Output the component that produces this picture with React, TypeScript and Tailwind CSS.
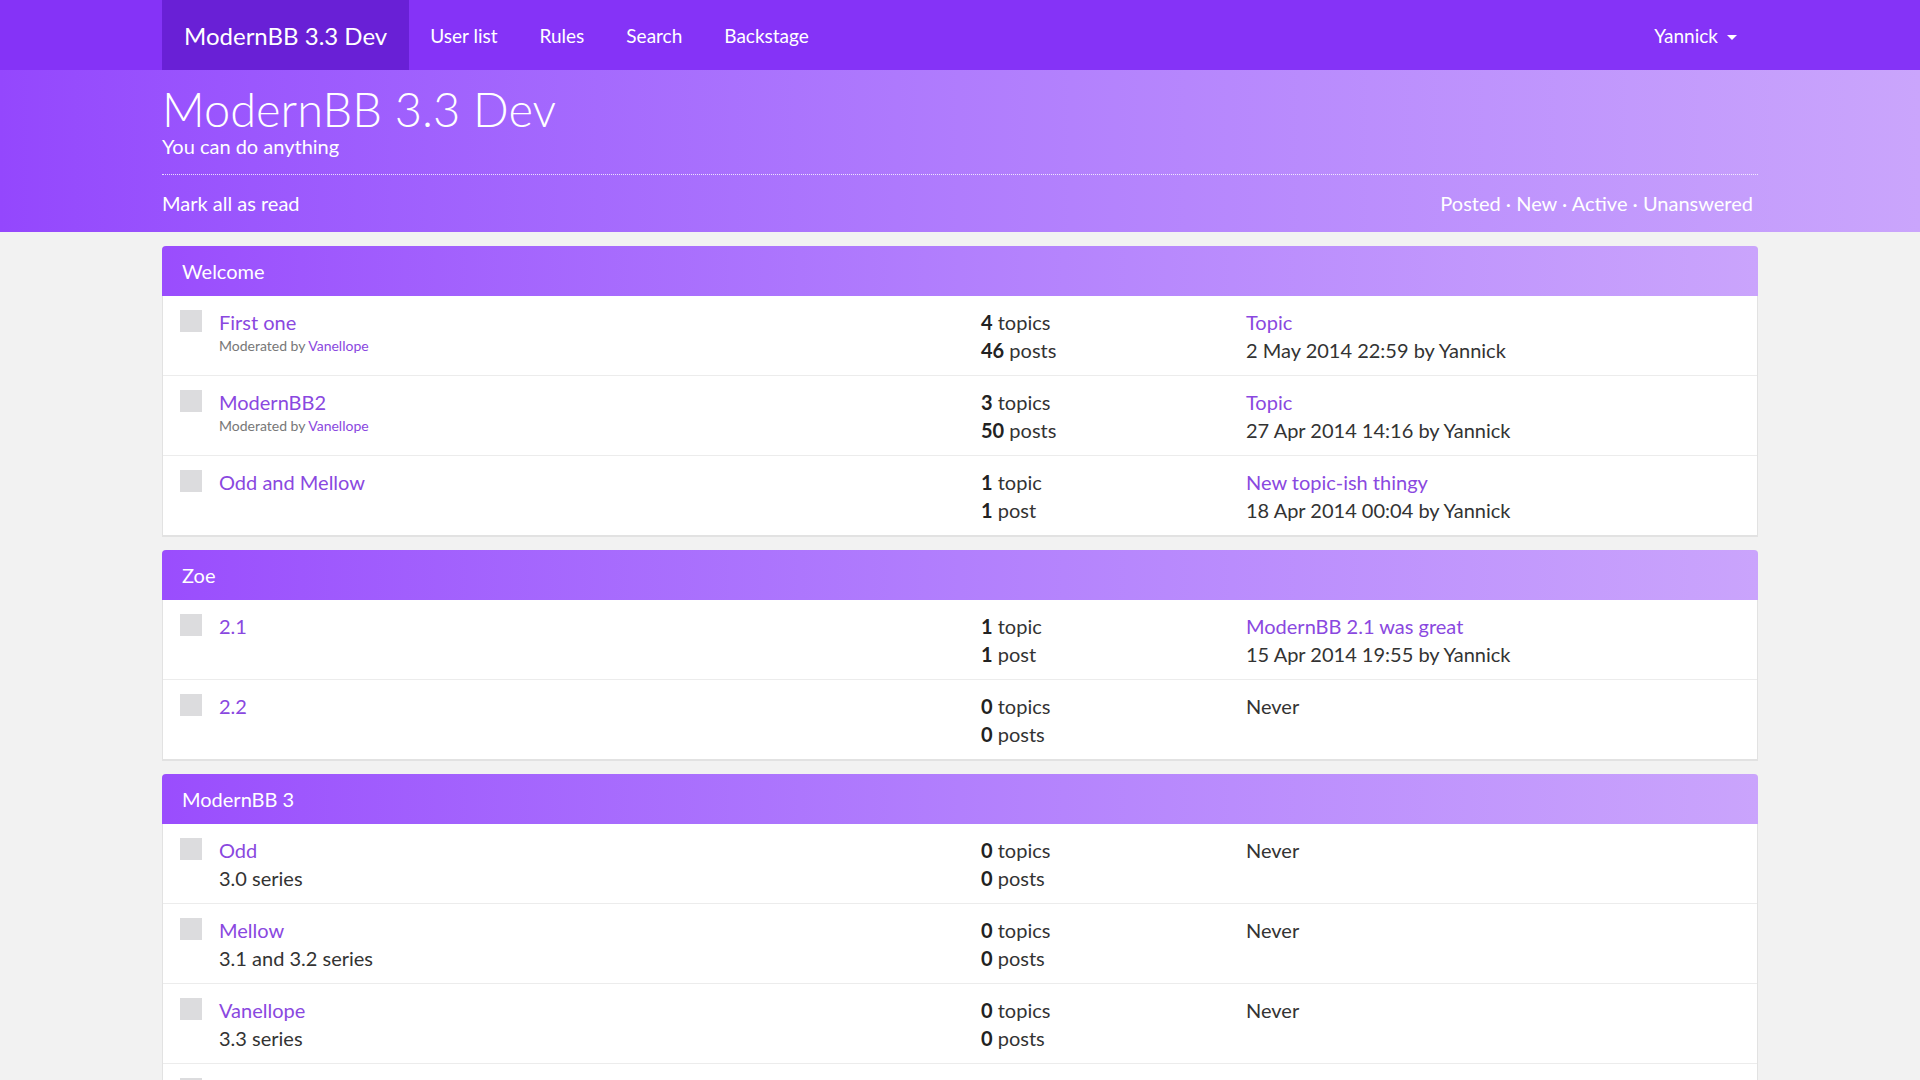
import React from "react";

type Forum = {
  name: string;
  desc?: string;
  moderator?: string;
  topics: number;
  posts: number;
  last?: { title: string; meta: string };
};

type Category = { name: string; forums: Forum[] };

const categories: Category[] = [
  {
    name: "Welcome",
    forums: [
      { name: "First one", moderator: "Vanellope", topics: 4, posts: 46, last: { title: "Topic", meta: "2 May 2014 22:59 by Yannick" } },
      { name: "ModernBB2", moderator: "Vanellope", topics: 3, posts: 50, last: { title: "Topic", meta: "27 Apr 2014 14:16 by Yannick" } },
      { name: "Odd and Mellow", topics: 1, posts: 1, last: { title: "New topic-ish thingy", meta: "18 Apr 2014 00:04 by Yannick" } },
    ],
  },
  {
    name: "Zoe",
    forums: [
      { name: "2.1", topics: 1, posts: 1, last: { title: "ModernBB 2.1 was great", meta: "15 Apr 2014 19:55 by Yannick" } },
      { name: "2.2", topics: 0, posts: 0 },
    ],
  },
  {
    name: "ModernBB 3",
    forums: [
      { name: "Odd", desc: "3.0 series", topics: 0, posts: 0 },
      { name: "Mellow", desc: "3.1 and 3.2 series", topics: 0, posts: 0 },
      { name: "Vanellope", desc: "3.3 series", topics: 0, posts: 0 },
      { name: "Zoe", desc: "3.4 series", topics: 0, posts: 0 },
    ],
  },
];

const font = { fontFamily: "Lato, 'Open Sans', sans-serif" };

function plural(n: number, word: string) {
  return n === 1 ? word : word + "s";
}

function ForumRow({ forum, first }: { forum: Forum; first: boolean }) {
  return (
    <div
      className={
        "grid grid-cols-[801px_265px_1fr] pl-[17px] pt-3 pb-[11px] bg-white" +
        (first ? "" : " border-t border-[#ececec]")
      }
    >
      <div className="flex gap-[17px]">
        <div className="w-[22px] h-[22px] mt-[2px] bg-[#dcdcde] shrink-0" />
        <div>
          <a href="#" className="block text-[20px] leading-[28px] text-[#8a48e0]">
            {forum.name}
          </a>
          {forum.moderator && (
            <div className="text-[14px] leading-[20px] text-[#777]">
              Moderated by <a href="#" className="text-[#8a48e0]">{forum.moderator}</a>
            </div>
          )}
          {forum.desc && <div className="text-[20px] leading-[28px] text-[#333]">{forum.desc}</div>}
        </div>
      </div>
      <div className="text-[20px] leading-[28px] text-[#333]">
        <div>
          <span className="font-bold text-[#222]">{forum.topics}</span> {plural(forum.topics, "topic")}
        </div>
        <div>
          <span className="font-bold text-[#222]">{forum.posts}</span> {plural(forum.posts, "post")}
        </div>
      </div>
      <div className="text-[20px] leading-[28px] text-[#333]">
        {forum.last ? (
          <>
            <a href="#" className="block text-[#8a48e0]">{forum.last.title}</a>
            <div>{forum.last.meta}</div>
          </>
        ) : (
          <div>Never</div>
        )}
      </div>
    </div>
  );
}

function CategoryPanel({ cat }: { cat: Category }) {
  return (
    <div className="border-x border-b-2 border-[#e2e2e2] rounded-t-[4px]">
      <div className="h-[50px] flex items-center pl-[20px] -mx-px rounded-t-[4px] bg-linear-to-r from-[#9a4dfd] via-[#b27ffd] to-[#caa4fc] text-white text-[20px]">
        {cat.name}
      </div>
      {cat.forums.map((f, i) => (
        <ForumRow key={f.name} forum={f} first={i === 0} />
      ))}
    </div>
  );
}

export default function App() {
  return (
    <div className="min-h-screen bg-[#f2f2f2]" style={font}>
      <nav className="h-[70px] bg-[#8533f7] text-white">
        <div className="w-[1596px] mx-auto h-full flex items-stretch">
          <a href="#" className="flex items-center pt-[1px] px-[22px] bg-[#6920d6] text-[24px]">
            ModernBB 3.3 Dev
          </a>
          {["User list", "Rules", "Search", "Backstage"].map((l) => (
            <a key={l} href="#" className="flex items-center pt-[2px] px-[21px] text-[19px]">
              {l}
            </a>
          ))}
          <a href="#" className="ml-auto flex items-center pt-[2px] gap-[9px] px-[21px] text-[19px]">
            Yannick
            <span className="w-0 h-0 border-x-[5px] border-x-transparent border-t-[5px] border-t-white mt-[2px]" />
          </a>
        </div>
      </nav>

      <header className="bg-linear-to-r from-[#9447fd] via-[#b07cfd] to-[#caa5fc] text-white">
        <div className="w-[1596px] mx-auto pt-[14px]">
          <h1 className="text-[47px] leading-[50px] font-light">ModernBB 3.3 Dev</h1>
          <p className="text-[20px] leading-[24px]">You can do anything</p>
          <div className="mt-[16px] border-b border-dotted border-white/80" />
          <div className="flex justify-between pt-[14px] pb-[15px] text-[20px] leading-[28px]">
            <a href="#">Mark all as read</a>
            <div className="pr-[5px]">
              <a href="#">Posted</a> · <a href="#">New</a> · <a href="#">Active</a> · <a href="#">Unanswered</a>
            </div>
          </div>
        </div>
      </header>

      <main className="w-[1596px] mx-auto pt-[14px] pb-10 flex flex-col gap-[13px]">
        {categories.map((c) => (
          <CategoryPanel key={c.name} cat={c} />
        ))}
      </main>
    </div>
  );
}
